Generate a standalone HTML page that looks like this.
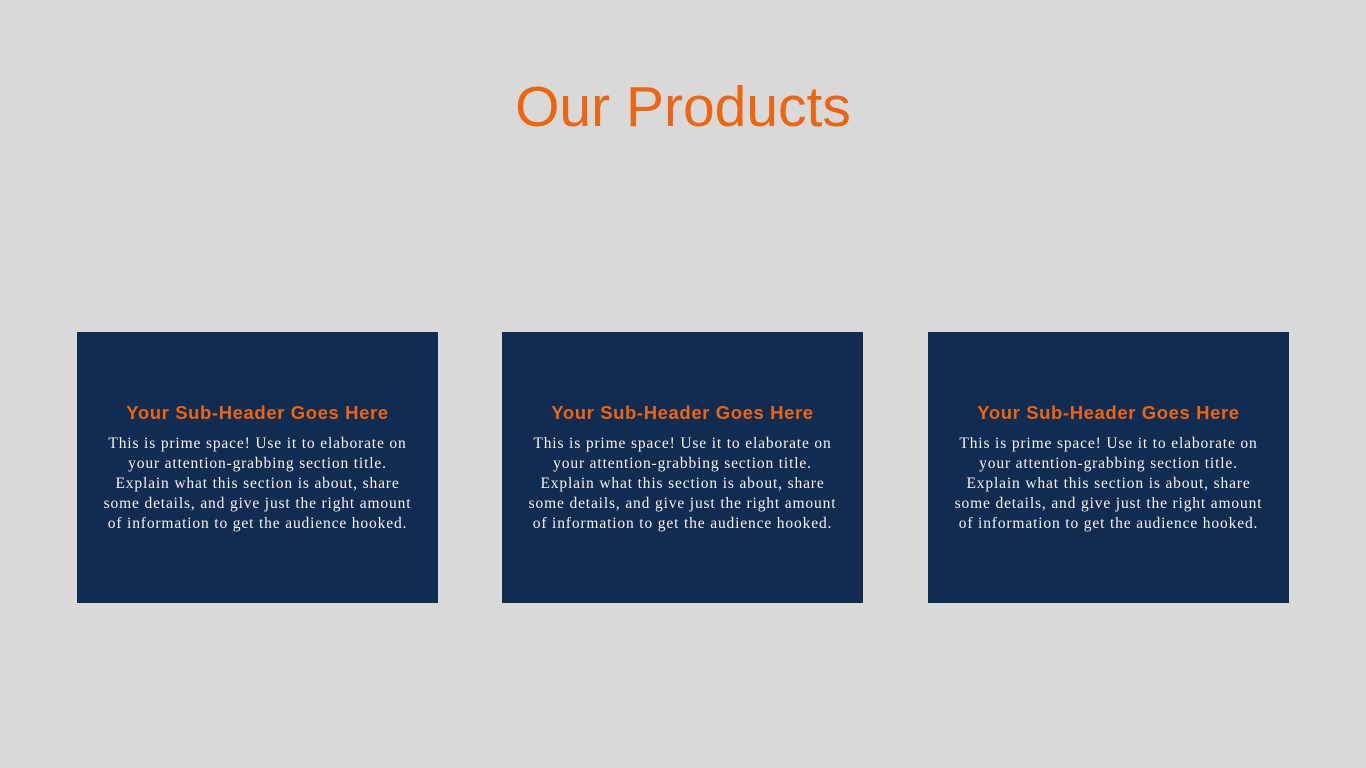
<!DOCTYPE html>
<html><head><style>
body{margin:0;width:1366px;height:768px;background:#d9d9d9;position:relative;overflow:hidden}
h1{position:absolute;top:71px;left:0;width:1366px;margin:0;text-align:center;font:400 57px/72px "Liberation Sans",sans-serif;color:#ec6510;letter-spacing:0}
.card{position:absolute;top:332px;width:361px;height:271px;background:#122b50;text-align:center}
.s{position:absolute;top:69px;left:0;width:100%;font:700 18.5px/24px "Liberation Sans",sans-serif;color:#ec6510;letter-spacing:0.6px}
.p{position:absolute;top:102px;left:0;width:100%;font:15.5px/20px "Liberation Serif",serif;color:#f2f2f2;letter-spacing:0.85px}
</style></head><body>
<h1>Our Products</h1>
<div class="card" style="left:77px"><div class="s">Your Sub-Header Goes Here</div><div class="p">This is prime space! Use it to elaborate on<br>your attention-grabbing section title.<br>Explain what this section is about, share<br>some details, and give just the right amount<br>of information to get the audience hooked.</div></div>
<div class="card" style="left:502px"><div class="s">Your Sub-Header Goes Here</div><div class="p">This is prime space! Use it to elaborate on<br>your attention-grabbing section title.<br>Explain what this section is about, share<br>some details, and give just the right amount<br>of information to get the audience hooked.</div></div>
<div class="card" style="left:928px"><div class="s">Your Sub-Header Goes Here</div><div class="p">This is prime space! Use it to elaborate on<br>your attention-grabbing section title.<br>Explain what this section is about, share<br>some details, and give just the right amount<br>of information to get the audience hooked.</div></div>
</body></html>
